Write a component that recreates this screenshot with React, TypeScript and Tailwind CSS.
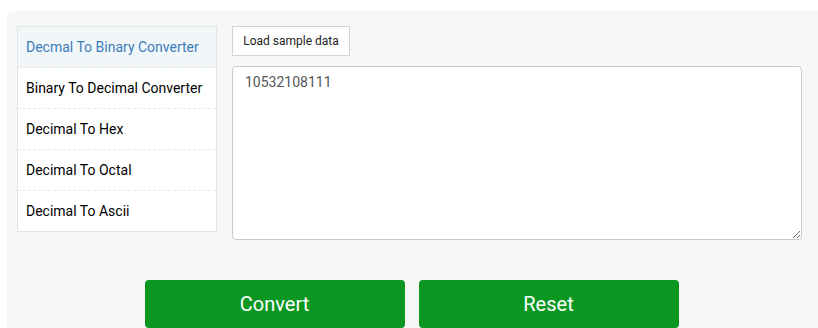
const items = [
    "Decmal To Binary Converter",
    "Binary To Decimal Converter",
    "Decimal To Hex",
    "Decimal To Octal",
    "Decimal To Ascii",
];

const App = () => {
    return (
        <div className="bg-white w-[818px] h-[328px] overflow-hidden pt-[11px] pl-[7px] font-['Roboto',sans-serif]">
            <div className="bg-[#f7f7f7] rounded-tl-[6px] w-[811px] h-[400px] pl-[10px] pt-[15px]">
                <div className="flex gap-[15px]">
                    <ul className="w-[200px] h-[206px] bg-white border border-[#e4e4e4]">
                        {items.map((item, i) => (
                            <li
                                key={item}
                                className={
                                    i === 0
                                        ? "h-[41px] flex items-center pl-[8px] text-[14px] text-[#3b7dbb] bg-[#f1f6f9] border-b border-dashed border-[#e8e8e8]"
                                        : i === items.length - 1
                                        ? "h-[40px] flex items-center pl-[8px] text-[14px] text-black"
                                        : "h-[41px] flex items-center pl-[8px] text-[14px] text-black border-b border-dashed border-[#e8e8e8]"
                                }
                            >
                                {item}
                            </li>
                        ))}
                    </ul>
                    <div className="w-[570px] flex flex-col gap-[10px]">
                        <button className="self-start w-[118px] h-[30px] bg-white border border-[#d4d4d4] text-[12px] text-[#222]">
                            Load sample data
                        </button>
                        <textarea
                            className="h-[174px] w-full bg-white border border-[#c8c8c8] rounded-[4px] px-[12px] py-[5px] text-[14px] text-[#555] outline-none"
                            defaultValue="10532108111"
                        />
                    </div>
                </div>
                <div className="flex justify-center gap-[14px] mt-[40px] pr-[12px]">
                    <button className="w-[260px] h-[48px] rounded-[4px] bg-[#0b9822] text-white text-[20px]">
                        Convert
                    </button>
                    <button className="w-[260px] h-[48px] rounded-[4px] bg-[#0b9822] text-white text-[20px]">
                        Reset
                    </button>
                </div>
            </div>
        </div>
    );
};

export default App;
